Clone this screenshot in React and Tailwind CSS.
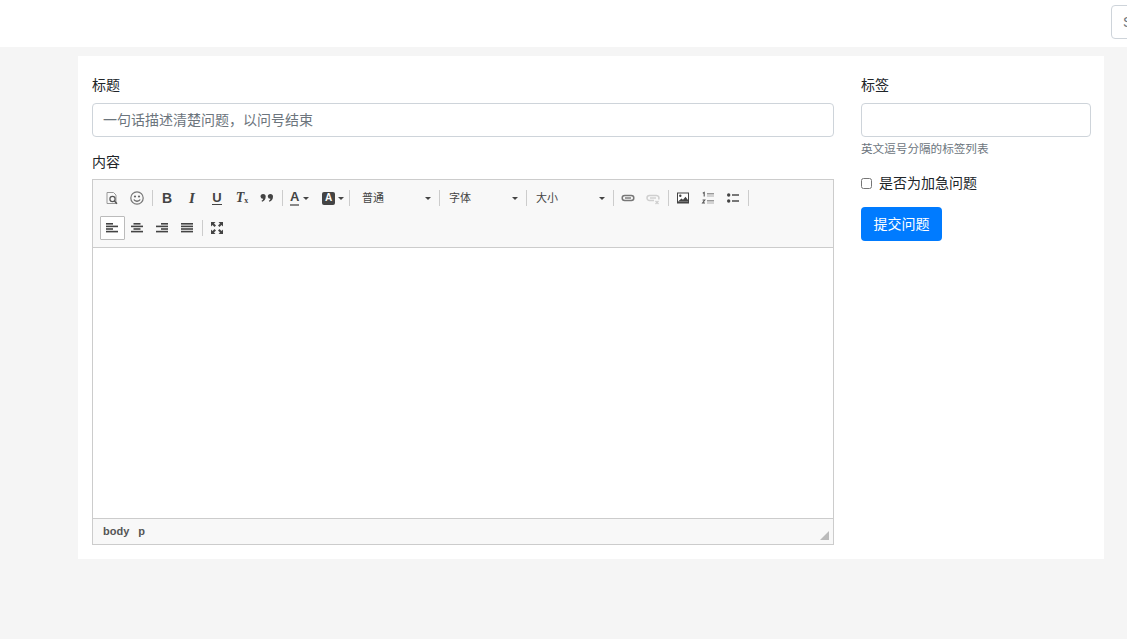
const FONT = "font-['Liberation_Sans','Noto_Sans_CJK_SC',sans-serif]";

function Icon({ children, className = "" }) {
  return (
    <svg width="16" height="16" viewBox="0 0 16 16" className={className}>
      {children}
    </svg>
  );
}

function Caret() {
  return <span className="block h-0 w-0 shrink-0 border-x-[3px] border-t-[3px] border-x-transparent border-t-[#444]" />;
}

function Sep() {
  return <span className="mx-[2px] h-[16px] w-px shrink-0 bg-[#ccc]" />;
}

function Btn({ children, active }) {
  return (
    <button
      type="button"
      className={`flex h-[24px] w-[25px] shrink-0 items-center justify-center rounded-[1px] border pr-[1px] ${
        active ? "border-[#bbb] bg-white" : "border-transparent"
      }`}
    >
      {children}
    </button>
  );
}

function Select({ label, first }) {
  return (
    <div
      className={`flex h-[24px] shrink-0 items-center justify-between pr-[6px] text-[11px] text-[#444] ${
        first ? "w-[85px] pl-[10px]" : "w-[82px] pl-[7px]"
      }`}
    >
      <span>{label}</span>
      <Caret />
    </div>
  );
}

function AlignIcon({ rows }) {
  return (
    <Icon>
      {rows.map(([x, y, w]) => (
        <rect key={y} x={x} y={y} width={w} height="1.6" fill="#444" />
      ))}
    </Icon>
  );
}

function Toolbar() {
  return (
    <div className="flex flex-wrap items-center border-b border-[#ccc] bg-[#f8f8f8] pl-[7px] pr-[60px] pt-[6px] pb-[7px]">
      <div className="flex h-[24px] w-full items-center">
        <Btn>
          <Icon>
            <path d="M3 2.500h6.500l2.500 2.500v8.500H3z" fill="none" stroke="#999" />
            <circle cx="8.500" cy="9" r="2.600" fill="#f8f8f8" stroke="#555" strokeWidth="1.200" />
            <path d="M10.400 11l2.600 2.800" stroke="#555" strokeWidth="1.400" />
          </Icon>
        </Btn>
        <Btn>
          <Icon>
            <circle cx="8" cy="8" r="6.200" fill="none" stroke="#777" strokeWidth="1.200" />
            <circle cx="6" cy="6.500" r="1.100" fill="#666" />
            <circle cx="10" cy="6.500" r="1.100" fill="#666" />
            <path d="M4.800 9.500c1.500 2.300 4.900 2.300 6.400 0" fill="none" stroke="#666" strokeWidth="1.300" />
          </Icon>
        </Btn>
        <Sep />
        <Btn>
          <span className="text-[14px] font-bold leading-none text-[#444]">B</span>
        </Btn>
        <Btn>
          <span className="font-['Liberation_Serif',serif] text-[15px] font-bold italic leading-none text-[#444]">I</span>
        </Btn>
        <Btn>
          <span className="border-b-[1.5px] border-[#444] text-[13px] font-bold leading-[13px] text-[#444]">U</span>
        </Btn>
        <Btn>
          <span className="flex items-end font-['Liberation_Serif',serif] text-[14px] font-bold italic leading-none text-[#444]">
            T<span className="text-[8px] not-italic">x</span>
          </span>
        </Btn>
        <Btn>
          <Icon>
            <path
              d="M1.500 6.500a2.600 2.600 0 1 1 5.200 0c0 2.800-1.500 4.500-3.600 5.300l-.6-1c1-.6 1.600-1.300 1.700-2.100a2.500 2.500 0 0 1-2.700-2.200zM8.800 6.500a2.600 2.600 0 1 1 5.200 0c0 2.800-1.500 4.500-3.600 5.300l-.6-1c1-.6 1.600-1.300 1.700-2.100a2.500 2.500 0 0 1-2.700-2.200z"
              fill="#444"
            />
          </Icon>
        </Btn>
        <Sep />
        <div className="flex h-[24px] w-[30px] shrink-0 items-center pl-[5px]">
          <span className="border-b-[2px] border-[#888] text-[13px] font-bold leading-[14px] text-[#444]">A</span>
          <span className="ml-[4px]"><Caret /></span>
        </div>
        <div className="flex h-[24px] w-[32px] shrink-0 items-center pl-[7px]">
          <span className="flex h-[13px] w-[13px] items-center justify-center rounded-[2px] bg-[#444] text-[10px] font-bold leading-none text-white">A</span>
          <span className="ml-[3px]"><Caret /></span>
        </div>
        <Sep />
        <Select label="普通" first />
        <Sep />
        <Select label="字体" />
        <Sep />
        <Select label="大小" />
        <Sep />
        <Btn>
          <Icon>
            <rect x="2.200" y="5.500" width="11.600" height="5" rx="2.500" fill="none" stroke="#777" strokeWidth="1.500" />
            <path d="M5 8h6" stroke="#777" strokeWidth="1.400" />
          </Icon>
        </Btn>
        <Btn>
          <Icon>
            <path d="M9 10.500H4.500a2.500 2.500 0 0 1 0-5h7a2.500 2.500 0 0 1 2 4" fill="none" stroke="#cfcfcf" strokeWidth="1.500" />
            <path d="M5 8h6" stroke="#cfcfcf" strokeWidth="1.400" />
            <path d="M10.500 11l3 3m0-3l-3 3" stroke="#cfcfcf" strokeWidth="1.300" />
          </Icon>
        </Btn>
        <Sep />
        <Btn>
          <Icon>
            <rect x="2" y="2.500" width="12" height="11" fill="#444" />
            <rect x="3" y="3.500" width="10" height="8" fill="#fff" />
            <circle cx="5.300" cy="5.800" r="1.200" fill="#444" />
            <path d="M3 11.500l3.500-3 1.500 1.200 2.500-3 2.500 3.200v1.600z" fill="#444" />
          </Icon>
        </Btn>
        <Btn>
          <Icon>
            <path d="M2.800 3.200l1.400-.8v4" fill="none" stroke="#555" strokeWidth="1.100" />
            <path d="M2.600 10h2.200l-2.200 3h2.400" fill="none" stroke="#555" strokeWidth="1.100" />
            <rect x="7" y="3" width="7" height="1.500" fill="#999" />
            <rect x="7" y="5.400" width="7" height="1.200" fill="#bbb" />
            <rect x="7" y="10" width="7" height="1.500" fill="#999" />
            <rect x="7" y="12.400" width="7" height="1.200" fill="#bbb" />
          </Icon>
        </Btn>
        <Btn>
          <Icon>
            <circle cx="3.700" cy="5" r="1.700" fill="#444" />
            <circle cx="3.700" cy="11" r="1.700" fill="#444" />
            <rect x="7" y="4" width="7" height="2" fill="#777" />
            <rect x="7" y="10" width="7" height="2" fill="#777" />
          </Icon>
        </Btn>
        <Sep />
      </div>
      <div className="mt-[6px] flex h-[24px] w-full items-center">
        <Btn active>
          <AlignIcon rows={[[2, 3, 7], [2, 5.600, 12], [2, 8.200, 7], [2, 10.800, 12]]} />
        </Btn>
        <Btn>
          <AlignIcon rows={[[4.500, 3, 7], [2, 5.600, 12], [4.500, 8.200, 7], [2, 10.800, 12]]} />
        </Btn>
        <Btn>
          <AlignIcon rows={[[7, 3, 7], [2, 5.600, 12], [7, 8.200, 7], [2, 10.800, 12]]} />
        </Btn>
        <Btn>
          <AlignIcon rows={[[2, 3, 12], [2, 5.600, 12], [2, 8.200, 12], [2, 10.800, 12]]} />
        </Btn>
        <Sep />
        <Btn>
          <Icon>
            <g fill="#444">
              <path d="M2 2h4.500L5 3.500l2 2L5.500 7l-2-2L2 6.500z" />
              <path d="M14 2v4.500L12.500 5l-2 2L9 5.500l2-2L9.500 2z" />
              <path d="M2 14V9.500L3.500 11l2-2L7 10.500l-2 2L6.500 14z" />
              <path d="M14 14H9.500l1.500-1.500-2-2L10.500 9l2 2 1.500-1.500z" />
            </g>
          </Icon>
        </Btn>
      </div>
    </div>
  );
}

function Editor() {
  return (
    <div className="border border-[#ccc] bg-white">
      <Toolbar />
      <div className="h-[270px] bg-white" />
      <div className="relative flex h-[26px] items-center gap-[9px] border-t border-[#ccc] bg-[#f8f8f8] pl-[10px] text-[11px] font-bold text-[#555]">
        <span>body</span>
        <span>p</span>
        <span className="absolute bottom-[4px] right-[4px] h-0 w-0 border-b-[9px] border-l-[9px] border-b-[#bbb] border-l-transparent" />
      </div>
    </div>
  );
}

export default function App() {
  return (
    <div className={`${FONT} h-[639px] overflow-hidden bg-[#f5f5f5] text-[14px] text-[#212529]`}>
      <header className="flex h-[47px] justify-start overflow-hidden bg-white pl-[1111px] pt-[5px]">
        <div className="flex h-[34px] w-[60px] shrink-0 items-center rounded-[4px] border border-[#ced4da] pl-[11px] text-[#6c757d]">
          S
        </div>
      </header>
      <main className="ml-[78px] mt-[9px] flex h-[503px] w-[1026px] bg-white pl-[14px] pr-[13px] pt-[19px]">
        <section className="w-[742px]">
          <label className="block leading-[21px]">标题</label>
          <input
            readOnly
            placeholder="一句话描述清楚问题，以问号结束"
            className="mt-[7px] block h-[34px] w-full rounded-[4px] border border-[#ced4da] bg-white px-[10px] text-[14px] outline-none placeholder:text-[#6c757d]"
          />
          <label className="mt-[15px] block leading-[21px]">内容</label>
          <div className="mt-[6px]">
            <Editor />
          </div>
        </section>
        <aside className="ml-[27px] w-[230px]">
          <label className="block leading-[21px]">标签</label>
          <input
            readOnly
            className="mt-[7px] block h-[34px] w-full rounded-[4px] border border-[#ced4da] bg-white outline-none"
          />
          <p className="mt-[3px] text-[11.6px] leading-[18px] text-[#6c757d]">英文逗号分隔的标签列表</p>
          <label className="mt-[15px] flex h-[21px] items-center">
            <input type="checkbox" readOnly className="h-[11px] w-[11px]" />
            <span className="ml-[7px]">是否为加急问题</span>
          </label>
          <button
            type="button"
            className="mt-[13px] flex h-[34px] w-[81px] items-center justify-center rounded-[4px] bg-[#007bff] text-white"
          >
            提交问题
          </button>
        </aside>
      </main>
    </div>
  );
}
